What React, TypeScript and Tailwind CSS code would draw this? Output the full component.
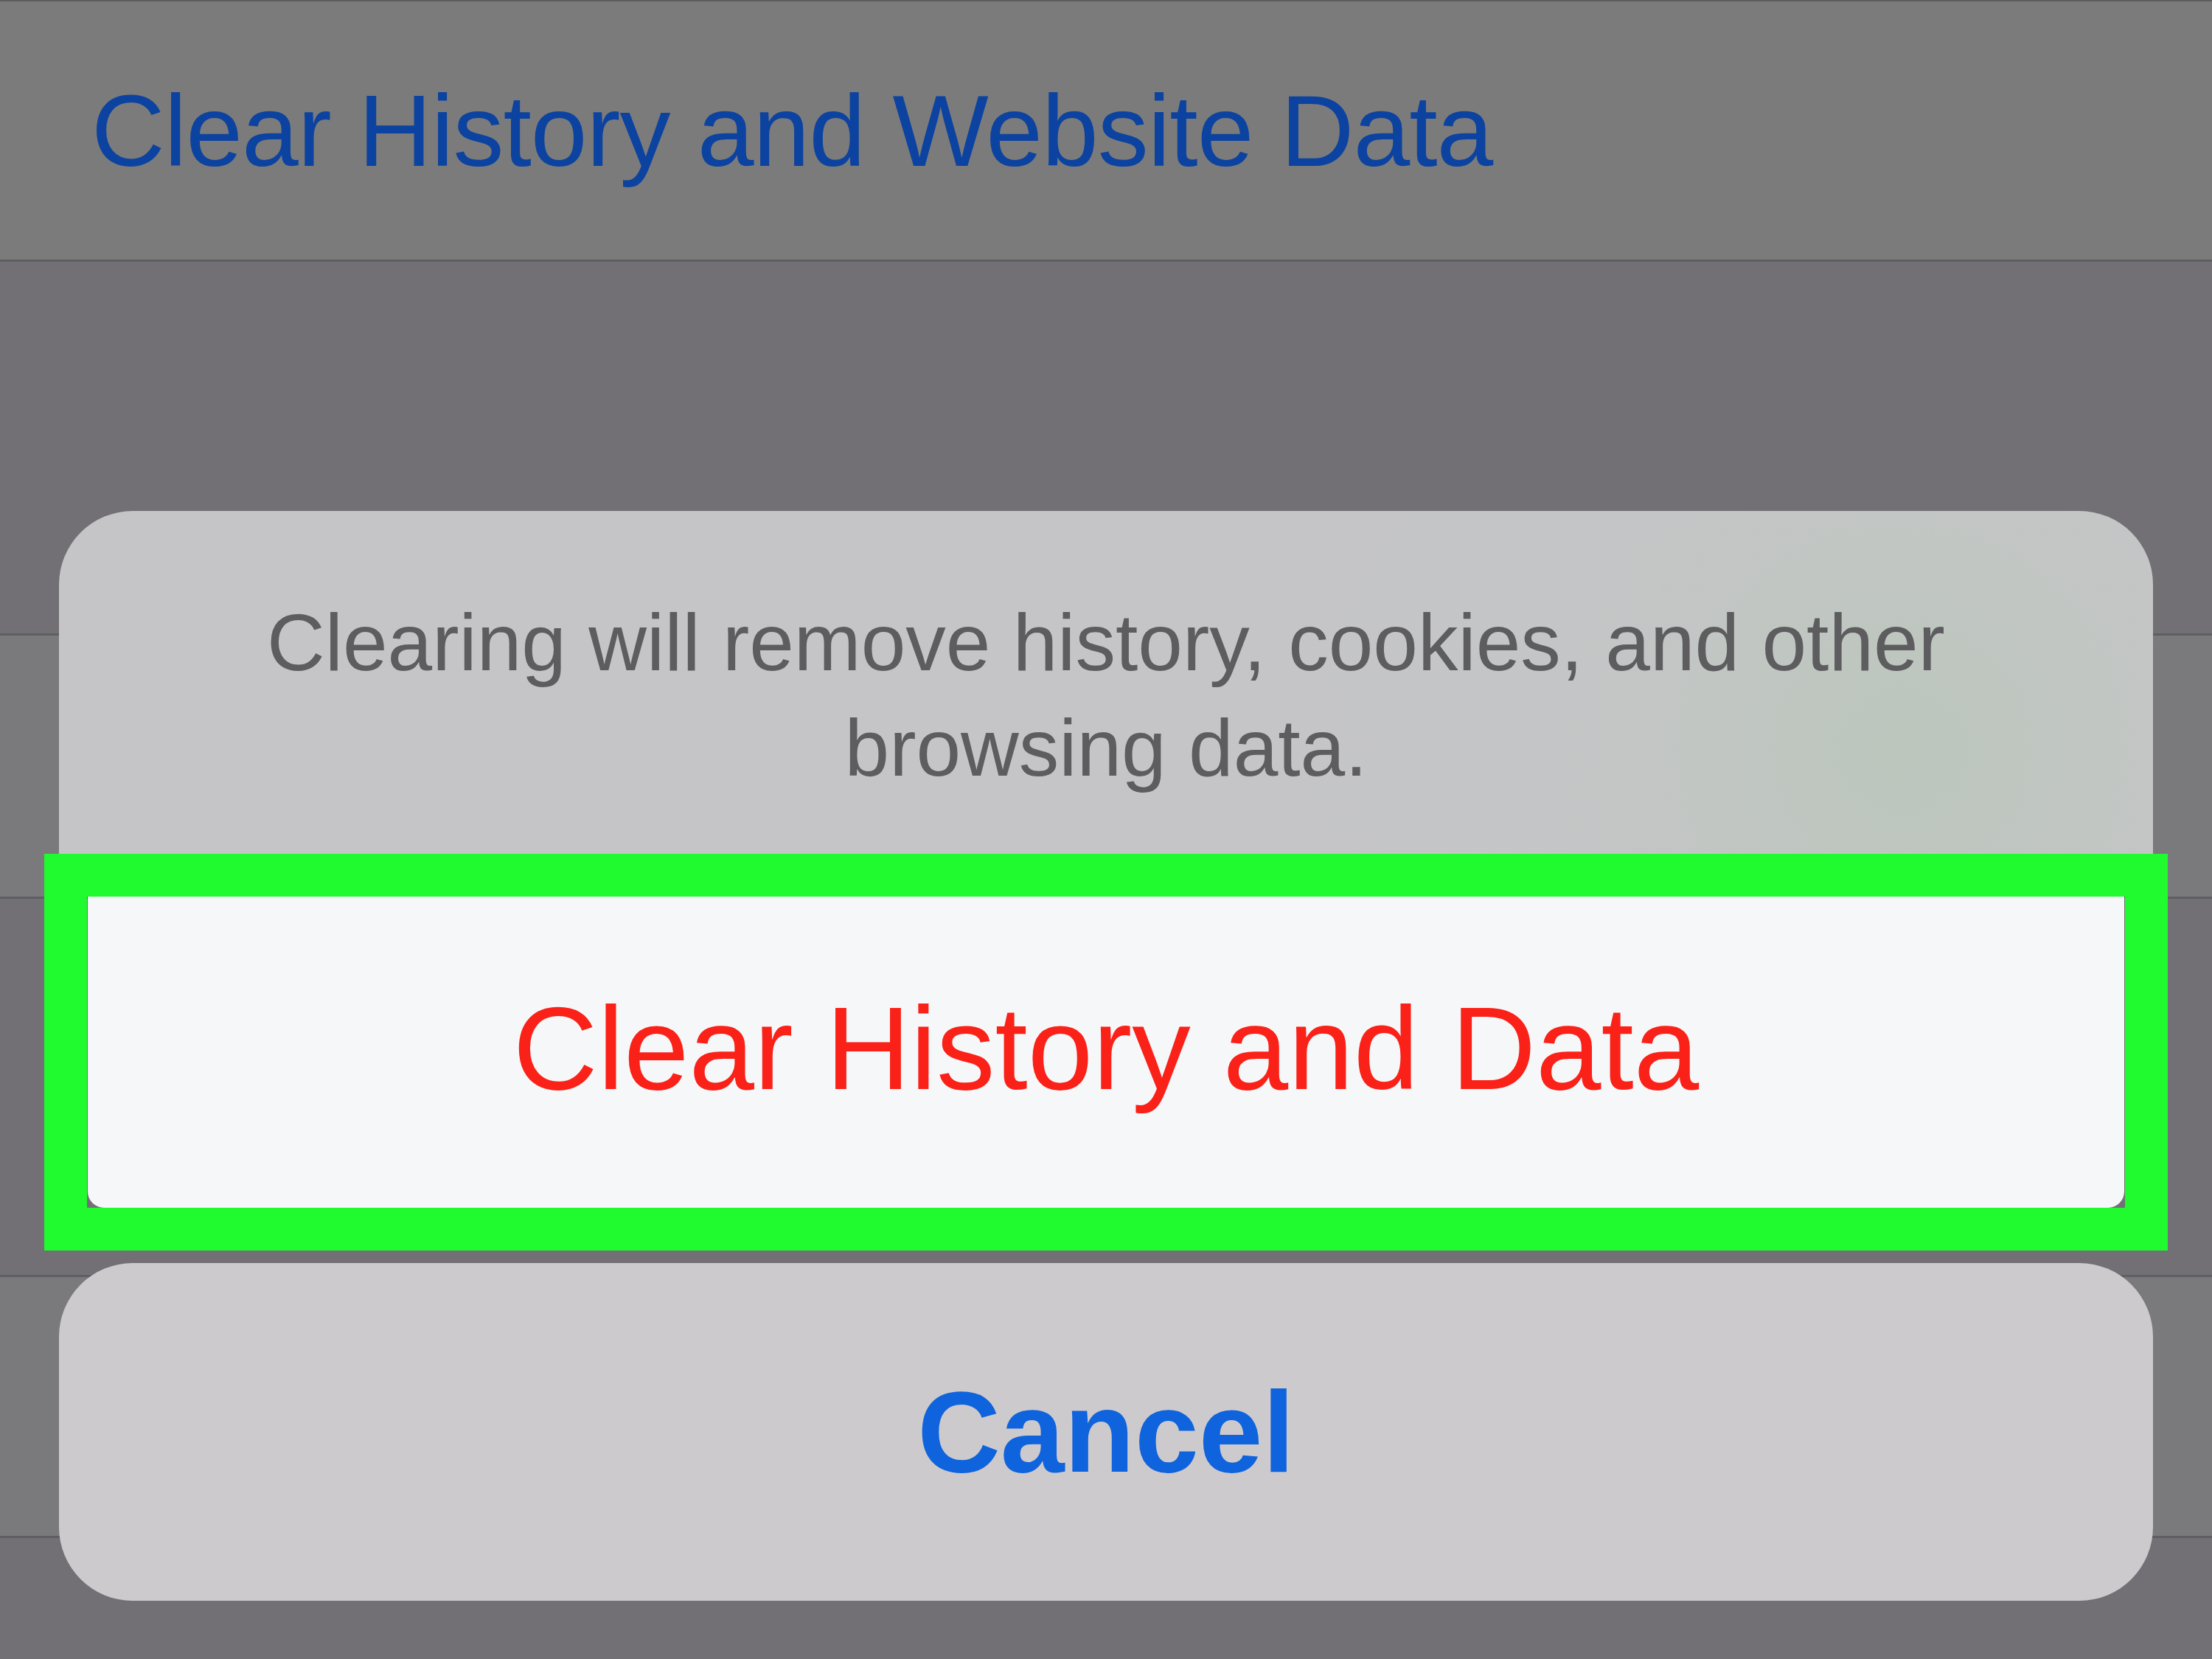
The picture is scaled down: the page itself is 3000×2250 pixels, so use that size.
import React from "react";

export default function App() {
  const sans = { fontFamily: '"Liberation Sans", Arial, sans-serif' };
  return (
    <div
      className="relative w-[3000px] h-[2250px] overflow-hidden bg-[#727075]"
      style={sans}
    >
      {/* Underlying settings page (dimmed) */}
      <div className="flex h-[355px] items-center border-t-2 border-b-[3px] border-t-[#5c5c5c] border-b-[#5e5d61] bg-[#7b7b7b] pl-[124px]">
        <span className="text-[138px] leading-none tracking-[-1px] text-[#0c43a0]">
          Clear History and Website Data
        </span>
      </div>
      <div className="mt-[504px] h-[360px] border-y-[3px] border-[#5f5e62] bg-[#7a797c]" />
      <div className="mt-[510px] h-[357px] border-y-[3px] border-[#5f5e62] bg-[#7a797c]" />

      {/* Action sheet overlay */}
      <div className="absolute left-[80px] top-[693px] flex w-[2840px] flex-col">
        <div className="relative h-[523px] overflow-hidden rounded-t-[100px] bg-[#c5c5c7]">
          <div className="absolute inset-0 bg-[radial-gradient(circle_at_88%_62%,rgba(176,200,176,0.45),rgba(190,200,190,0.15)_16%,transparent_34%)]" />
          <p className="relative px-[100px] pt-[107px] text-center text-[109px] leading-[143px] text-[#5d5d5f]">
            Clearing will remove history, cookies, and other
            <br />
            browsing data.
          </p>
        </div>
        <div className="mx-[39px] flex h-[422px] items-center justify-center rounded-b-[22px] bg-[#f6f7f8] pb-[10px]">
          <span className="text-[159px] leading-none text-[#fa2119]">
            Clear History and Data
          </span>
        </div>
        <div className="mt-[75px] flex h-[458px] items-center justify-center rounded-[100px] bg-[#cccacd]">
          <span className="text-[156px] font-bold leading-none text-[#0f63dc]">
            Cancel
          </span>
        </div>
      </div>

      {/* Green highlight box */}
      <div className="absolute left-[60px] top-[1158px] h-[538px] w-[2880px] border-[58px] border-[#1ffb2f]" />
    </div>
  );
}
